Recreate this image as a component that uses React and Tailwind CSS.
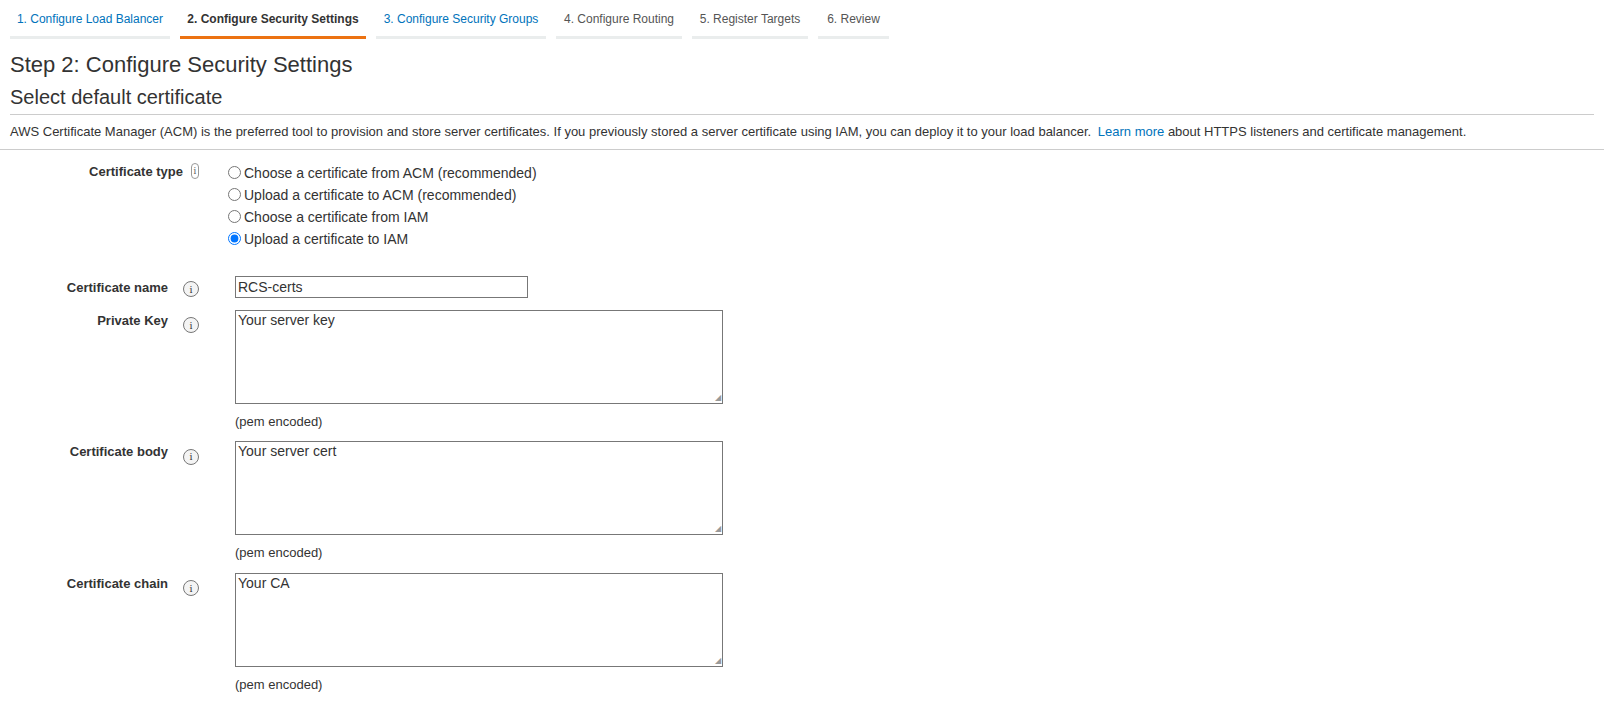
export default function App() {
  const tabs = [
    ["1. Configure Load Balancer", "w-[160px]", "link"],
    ["2. Configure Security Settings", "w-[186px]", "active"],
    ["3. Configure Security Groups", "w-[170px]", "link"],
    ["4. Configure Routing", "w-[126px]", "gray"],
    ["5. Register Targets", "w-[116px]", "gray"],
    ["6. Review", "w-[71px]", "gray"],
  ];
  const Info = () => (
    <span className="inline-flex w-[16px] h-[16px] rounded-full border border-[#777] items-center justify-center text-[11px] text-[#444] bg-[#f4f4f4] font-serif leading-none">i</span>
  );
  const radios = ["Choose a certificate from ACM (recommended)", "Upload a certificate to ACM (recommended)", "Choose a certificate from IAM", "Upload a certificate to IAM"];
  const Area = ({ label, text }) => (
    <div className="flex mt-[10px]">
      <div className="w-[235px] flex items-start pt-[1px]">
        <span className="w-[168px] text-right font-bold text-[13px]">{label}</span>
        <span className="ml-[15px] mt-[1px]"><Info /></span>
      </div>
      <div>
        <div className="w-[488px] h-[94px] border border-[#777] px-[2px] text-[14px] leading-[18px] relative">
          {text}
          <span className="absolute right-[1px] bottom-[1px] text-[8px] text-[#999] leading-none">◢</span>
        </div>
        <div className="text-[13px] mt-[8px]">(pem encoded)</div>
      </div>
    </div>
  );
  return (
    <div className="w-[1604px] h-[716px] bg-white text-[#333] overflow-hidden" style={{ fontFamily: "'Liberation Sans', Arial, sans-serif" }}>
      <div className="flex pl-[10px] pt-[10px] gap-[10px]">
        {tabs.map(([t, w, k], i) => (
          <div key={i} className={`${w} text-[12px] text-center pb-[8px] border-b-[3px] ${k === "active" ? "border-[#ec7211] font-bold text-[#333]" : "border-[#eaeded]"} ${k === "link" ? "text-[#0073bb]" : ""} ${k === "gray" ? "text-[#555]" : ""}`}>{t}</div>
        ))}
      </div>
      <div className="px-[10px]">
        <div className="text-[22px] mt-[12px] leading-[28px]">Step 2: Configure Security Settings</div>
        <div className="text-[20px] mt-[5px] leading-[26px] pb-[4px] border-b border-[#ccc]">Select default certificate</div>
      </div>
      <div className="text-[13px] px-[10px] py-[7px] border-b border-[#ccc] ml-0 mr-0">
        AWS Certificate Manager (ACM) is the preferred tool to provision and store server certificates. If you previously stored a server certificate using IAM, you can deploy it to your load balancer. <span className="text-[#0073bb] ml-[3px]">Learn more</span> about HTTPS listeners and certificate management.
      </div>
      <div className="pt-[12px]">
        <div className="flex">
          <div className="w-[228px] flex items-start">
            <span className="w-[183px] text-right font-bold text-[13px]">Certificate type</span>
            <span className="ml-[8px] mt-[1px] inline-flex w-[8px] h-[16px] rounded-full border border-[#999] items-center justify-center text-[10px] text-[#666] font-serif leading-none">i</span>
          </div>
          <div className="flex flex-col text-[14px] leading-[22px]">
            {radios.map((r, i) => (
              <label key={i} className="flex items-center">
                <input type="radio" name="ct" defaultChecked={i === 3} className="m-0 mr-[3px] w-[13px] h-[13px]" />
                {r}
              </label>
            ))}
          </div>
        </div>
        <div className="flex mt-[26px]">
          <div className="w-[235px] flex items-center">
            <span className="w-[168px] text-right font-bold text-[13px]">Certificate name</span>
            <span className="ml-[15px]"><Info /></span>
          </div>
          <div className="w-[293px] h-[22px] border border-[#777] px-[2px] text-[14px] leading-[20px]">RCS-certs</div>
        </div>
        <Area label="Private Key" text="Your server key" />
        <Area label="Certificate body" text="Your server cert" />
        <Area label="Certificate chain" text="Your CA" />
      </div>
    </div>
  );
}
